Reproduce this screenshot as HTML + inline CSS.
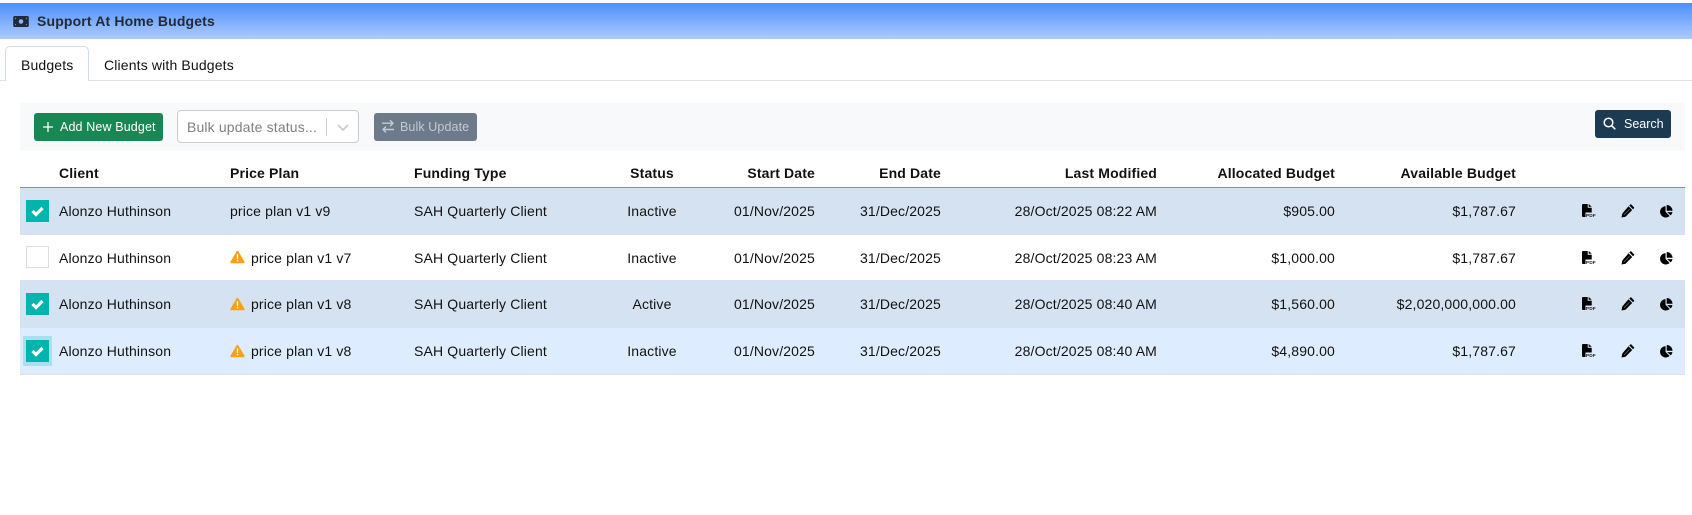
<!DOCTYPE html>
<html><head><meta charset="utf-8">
<style>
html,body{margin:0;padding:0;background:#fff}
#p{position:relative;width:1692px;height:515px;overflow:hidden;font-family:"Liberation Sans",sans-serif;font-size:14px;color:#111;letter-spacing:.15px}
.a{position:absolute;white-space:nowrap}
.r{position:absolute;left:20px;width:1665px}
.t{position:absolute;white-space:nowrap;line-height:20px}
.th{font-weight:700;top:163px}
.ra{text-align:right}
.cb{position:absolute;left:26px;width:23px;height:22px;background:#00b5ad}
svg{position:absolute;overflow:visible}
</style></head><body>
<svg width="0" height="0" style="position:absolute"><defs>
<symbol id="chk" viewBox="0 0 23 22"><path d="M6.500 11l3.500 3.500 6.500-6.500" fill="none" stroke="#fff" stroke-width="3.200"/></symbol>
<symbol id="warn" viewBox="0 0 16 14"><path d="M8 .5c.5 0 .9.3 1.100.7l6.400 10.800c.4.800-.1 1.600-1 1.600H1.500c-.9 0-1.400-.8-1-1.600L6.900 1.200C7.100.8 7.500.5 8 .5z" fill="#f9a01b"/><path d="M7.200 4h1.600l-.2 5H7.400zM7.200 10h1.600v1.600H7.200z" fill="#fff"/></symbol>
<symbol id="pdf" viewBox="0 0 14 14" style="overflow:visible"><path d="M0 1a1 1 0 0 1 1-1h4.700v3.700h4V8.500H3.500V13H1a1 1 0 0 1-1-1z" fill="#000"/><path d="M6.700 0l3 2.800h-3z" fill="#000"/><text x="3.900" y="13.200" font-family="Liberation Sans" font-size="4.800" font-weight="700" letter-spacing=".1" fill="#222">PDF</text></symbol>
<symbol id="pen" viewBox="0 0 14 14"><path d="M10.300.5L13 3.200c.3.300.3.700 0 1L12 5.200 8.300 1.500l1-1c.3-.3.700-.3 1 0zM7.500 2.300L11.200 6l-6.700 6.700-4 .8.800-4z" fill="#000"/><path d="M3 10.800l5.500-5.500" stroke="#888" stroke-width=".6"/></symbol>
<symbol id="pie" viewBox="0 0 14 14"><path d="M6.200 1.200v6.500l4.600 4.600A6.400 6.400 0 1 1 6.200 1.200z" fill="#000"/><path d="M7.500 0A6.500 6.500 0 0 1 14 6.500H7.500z" fill="#000"/><path d="M8 8h6a6.300 6.300 0 0 1-2 3.600z" fill="#000"/></symbol>
</defs></svg>
<div id="p">
<div class="a" style="left:0;top:3px;width:1692px;height:36px;background:linear-gradient(#4c8ffb,#aecbff)"></div>
<svg style="left:13px;top:15.500px" width="16" height="11" viewBox="0 0 17 12"><path d="M1.500 0h14c.8 0 1.500.7 1.500 1.500v9c0 .8-.7 1.500-1.500 1.500h-14C.7 12 0 11.300 0 10.500v-9C0 .7.700 0 1.500 0z" fill="#1f2a3a"/><circle cx="8.500" cy="6" r="2.500" fill="#8fb5fb"/><path d="M2 2h1.500L2 3.500zM15 2h-1.500L15 3.500zM2 10h1.500L2 8.500zM15 10h-1.500L15 8.500z" fill="#8fb5fb"/></svg>
<div class="t" style="left:37px;top:11px;font-weight:700;font-size:14px;color:#222a38">Support At Home Budgets</div>

<div class="a" style="left:0;top:80px;width:1692px;height:1px;background:#dee2e6"></div>
<div class="a" style="left:5px;top:46px;width:82px;border:1px solid #cfdcf2;border-bottom:0;border-radius:5px 5px 0 0;background:#fff;height:34px"></div>
<div class="t" style="left:21px;top:55px">Budgets</div>
<div class="t" style="left:104px;top:55px">Clients with Budgets</div>

<div class="a" style="left:20px;top:103px;width:1665px;height:48px;background:#f8f9fa"></div>
<div class="a" style="left:34px;top:113px;width:129px;height:28px;background:#198754;border-radius:3px"></div>
<svg style="left:43px;top:122px" width="10" height="10" viewBox="0 0 11 11"><path d="M5.500 0v11M0 5.500h11" stroke="#fff" stroke-width="1.400"/></svg>
<div class="t" style="left:60px;top:117px;font-size:12.500px;color:#fff;letter-spacing:.13px">Add New Budget</div>

<div class="a" style="left:177px;top:110px;width:182px;height:33px;box-sizing:border-box;background:#fff;border:1px solid #ccc;border-radius:4px"></div>
<div class="t" style="left:187px;top:117px;color:#808080">Bulk update status...</div>
<div class="a" style="left:326px;top:118px;width:1px;height:18px;background:#ccc"></div>
<svg style="left:337px;top:124px" width="12" height="7" viewBox="0 0 12 7"><path d="M1 1l5 5 5-5" fill="none" stroke="#ccc" stroke-width="1.800"/></svg>

<div class="a" style="left:374px;top:113px;width:103px;height:28px;background:#6c7a89;border-radius:3px"></div>
<svg style="left:382px;top:120px" width="12" height="13" viewBox="0 0 12 13" fill="none" stroke="#c3cad1" stroke-width="1.400"><path d="M0 3.200h10.500M8 .2l3 3-3 3"/><path d="M12 9.500H1.500M4 6.500l-3 3 3 3"/></svg>
<div class="t" style="left:400px;top:117px;font-size:12.500px;color:#c3cad1;letter-spacing:.1px">Bulk Update</div>

<div class="a" style="left:1595px;top:110px;width:76px;height:28px;background:#1c3a52;border-radius:3px"></div>
<svg style="left:1603px;top:117px" width="13" height="13" viewBox="0 0 13 13" fill="none" stroke="#fff" stroke-width="1.500"><circle cx="5.500" cy="5.500" r="4.300"/><path d="M8.700 8.700l3.600 3.600"/></svg>
<div class="t" style="left:1624px;top:113.500px;font-size:12.500px;color:#fff;letter-spacing:0">Search</div>

<div class="t th" style="left:59px">Client</div>
<div class="t th" style="left:230px">Price Plan</div>
<div class="t th" style="left:414px">Funding Type</div>
<div class="t th" style="left:552px;width:200px;text-align:center">Status</div>
<div class="t th ra" style="right:877px">Start Date</div>
<div class="t th ra" style="right:751px">End Date</div>
<div class="t th ra" style="right:535px">Last Modified</div>
<div class="t th ra" style="right:357px">Allocated Budget</div>
<div class="t th ra" style="right:176px">Available Budget</div>
<div class="r" style="top:187px;height:1px;background:#2eb3d3"></div>

<div class="r" style="top:188px;height:47px;background:#d5e2f2"></div>
<div class="r" style="top:280px;height:48px;background:#d5e2f2"></div>
<div class="r" style="top:328px;height:46px;background:#ddecff"></div>
<div class="r" style="top:374px;height:1px;background:#dee2e6"></div>

<!-- row 1 -->
<div class="cb" style="top:200px"></div><svg style="left:26px;top:200px" width="23" height="22"><use href="#chk"/></svg>
<div class="t" style="left:59px;top:201px">Alonzo Huthinson</div>
<div class="t" style="left:230px;top:201px">price plan v1 v9</div>
<div class="t" style="left:414px;top:201px">SAH Quarterly Client</div>
<div class="t" style="left:552px;width:200px;text-align:center;top:201px">Inactive</div>
<div class="t ra" style="right:877px;top:201px">01/Nov/2025</div>
<div class="t ra" style="right:751px;top:201px">31/Dec/2025</div>
<div class="t ra" style="right:535px;top:201px">28/Oct/2025 08:22 AM</div>
<div class="t ra" style="right:357px;top:201px">$905.00</div>
<div class="t ra" style="right:176px;top:201px">$1,787.67</div>
<svg style="left:1582px;top:204px" width="14" height="14"><use href="#pdf"/></svg>
<svg style="left:1621px;top:204px" width="14" height="14"><use href="#pen"/></svg>
<svg style="left:1660px;top:205px" width="12.500" height="12.500"><use href="#pie"/></svg>

<!-- row 2 -->
<div class="cb" style="top:246px;background:#fff;border:1px solid #ddd;box-sizing:border-box"></div>
<div class="t" style="left:59px;top:248px">Alonzo Huthinson</div>
<svg style="left:230px;top:250px" width="15" height="14"><use href="#warn"/></svg>
<div class="t" style="left:251px;top:248px">price plan v1 v7</div>
<div class="t" style="left:414px;top:248px">SAH Quarterly Client</div>
<div class="t" style="left:552px;width:200px;text-align:center;top:248px">Inactive</div>
<div class="t ra" style="right:877px;top:248px">01/Nov/2025</div>
<div class="t ra" style="right:751px;top:248px">31/Dec/2025</div>
<div class="t ra" style="right:535px;top:248px">28/Oct/2025 08:23 AM</div>
<div class="t ra" style="right:357px;top:248px">$1,000.00</div>
<div class="t ra" style="right:176px;top:248px">$1,787.67</div>
<svg style="left:1582px;top:251px" width="14" height="14"><use href="#pdf"/></svg>
<svg style="left:1621px;top:251px" width="14" height="14"><use href="#pen"/></svg>
<svg style="left:1660px;top:252px" width="12.500" height="12.500"><use href="#pie"/></svg>

<!-- row 3 -->
<div class="cb" style="top:293px"></div><svg style="left:26px;top:293px" width="23" height="22"><use href="#chk"/></svg>
<div class="t" style="left:59px;top:294px">Alonzo Huthinson</div>
<svg style="left:230px;top:297px" width="15" height="14"><use href="#warn"/></svg>
<div class="t" style="left:251px;top:294px">price plan v1 v8</div>
<div class="t" style="left:414px;top:294px">SAH Quarterly Client</div>
<div class="t" style="left:552px;width:200px;text-align:center;top:294px">Active</div>
<div class="t ra" style="right:877px;top:294px">01/Nov/2025</div>
<div class="t ra" style="right:751px;top:294px">31/Dec/2025</div>
<div class="t ra" style="right:535px;top:294px">28/Oct/2025 08:40 AM</div>
<div class="t ra" style="right:357px;top:294px">$1,560.00</div>
<div class="t ra" style="right:176px;top:294px">$2,020,000,000.00</div>
<svg style="left:1582px;top:297px" width="14" height="14"><use href="#pdf"/></svg>
<svg style="left:1621px;top:297px" width="14" height="14"><use href="#pen"/></svg>
<svg style="left:1660px;top:298px" width="12.500" height="12.500"><use href="#pie"/></svg>

<!-- row 4 -->
<div class="a" style="left:23px;top:336px;width:29px;height:30px;background:#a8e0ef"></div>
<div class="cb" style="top:340px"></div><svg style="left:26px;top:340px" width="23" height="22"><use href="#chk"/></svg>
<div class="t" style="left:59px;top:341px">Alonzo Huthinson</div>
<svg style="left:230px;top:344px" width="15" height="14"><use href="#warn"/></svg>
<div class="t" style="left:251px;top:341px">price plan v1 v8</div>
<div class="t" style="left:414px;top:341px">SAH Quarterly Client</div>
<div class="t" style="left:552px;width:200px;text-align:center;top:341px">Inactive</div>
<div class="t ra" style="right:877px;top:341px">01/Nov/2025</div>
<div class="t ra" style="right:751px;top:341px">31/Dec/2025</div>
<div class="t ra" style="right:535px;top:341px">28/Oct/2025 08:40 AM</div>
<div class="t ra" style="right:357px;top:341px">$4,890.00</div>
<div class="t ra" style="right:176px;top:341px">$1,787.67</div>
<svg style="left:1582px;top:344px" width="14" height="14"><use href="#pdf"/></svg>
<svg style="left:1621px;top:344px" width="14" height="14"><use href="#pen"/></svg>
<svg style="left:1660px;top:345px" width="12.500" height="12.500"><use href="#pie"/></svg>
</div>
</body></html>
